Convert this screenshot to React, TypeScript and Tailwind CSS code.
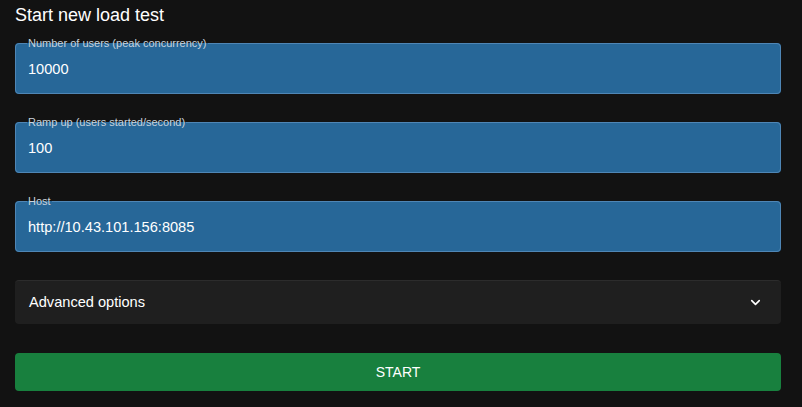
import { ChevronDown } from 'lucide-react'

function Field({ label, value }: { label: string; value: string }) {
  return (
    <fieldset className="relative m-0 h-[57px] rounded-[4px] border border-[#4f86b5] bg-[#276798] px-[12px] pt-0 pb-0">
      <legend className="-ml-px px-[1px] text-[11px] leading-[13px] text-[#c9d3dc]">{label}</legend>
      <div className="pt-[10px] text-[14.6px] leading-[18px] text-white">{value}</div>
    </fieldset>
  )
}

export default function App() {
  return (
    <div className="min-h-[407px] w-[802px] bg-[#121212] px-[15px] pt-[4px] font-['Liberation_Sans',Arial,sans-serif]">
      <h1 className="text-[18px] leading-[22px] text-white">Start new load test</h1>
      <div className="mt-[11px] flex w-[766px] flex-col gap-[22px]">
        <Field label="Number of users (peak concurrency)" value="10000" />
        <Field label="Ramp up (users started/second)" value="100" />
        <Field label="Host" value="http://10.43.101.156:8085" />
      </div>
      <div className="mt-[28px] flex h-[44px] w-[766px] items-center justify-between rounded-[4px] border-t border-[#2c2c2c] bg-[#1f1f1f] pl-[14px] pr-[18px]">
        <span className="text-[14.6px] text-white">Advanced options</span>
        <ChevronDown size={15} strokeWidth={2.6} className="text-white" />
      </div>
      <button className="mt-[29px] flex h-[38px] w-[766px] items-center justify-center rounded-[4px] bg-[#18803e] text-[14px] text-white">
        START
      </button>
    </div>
  )
}
